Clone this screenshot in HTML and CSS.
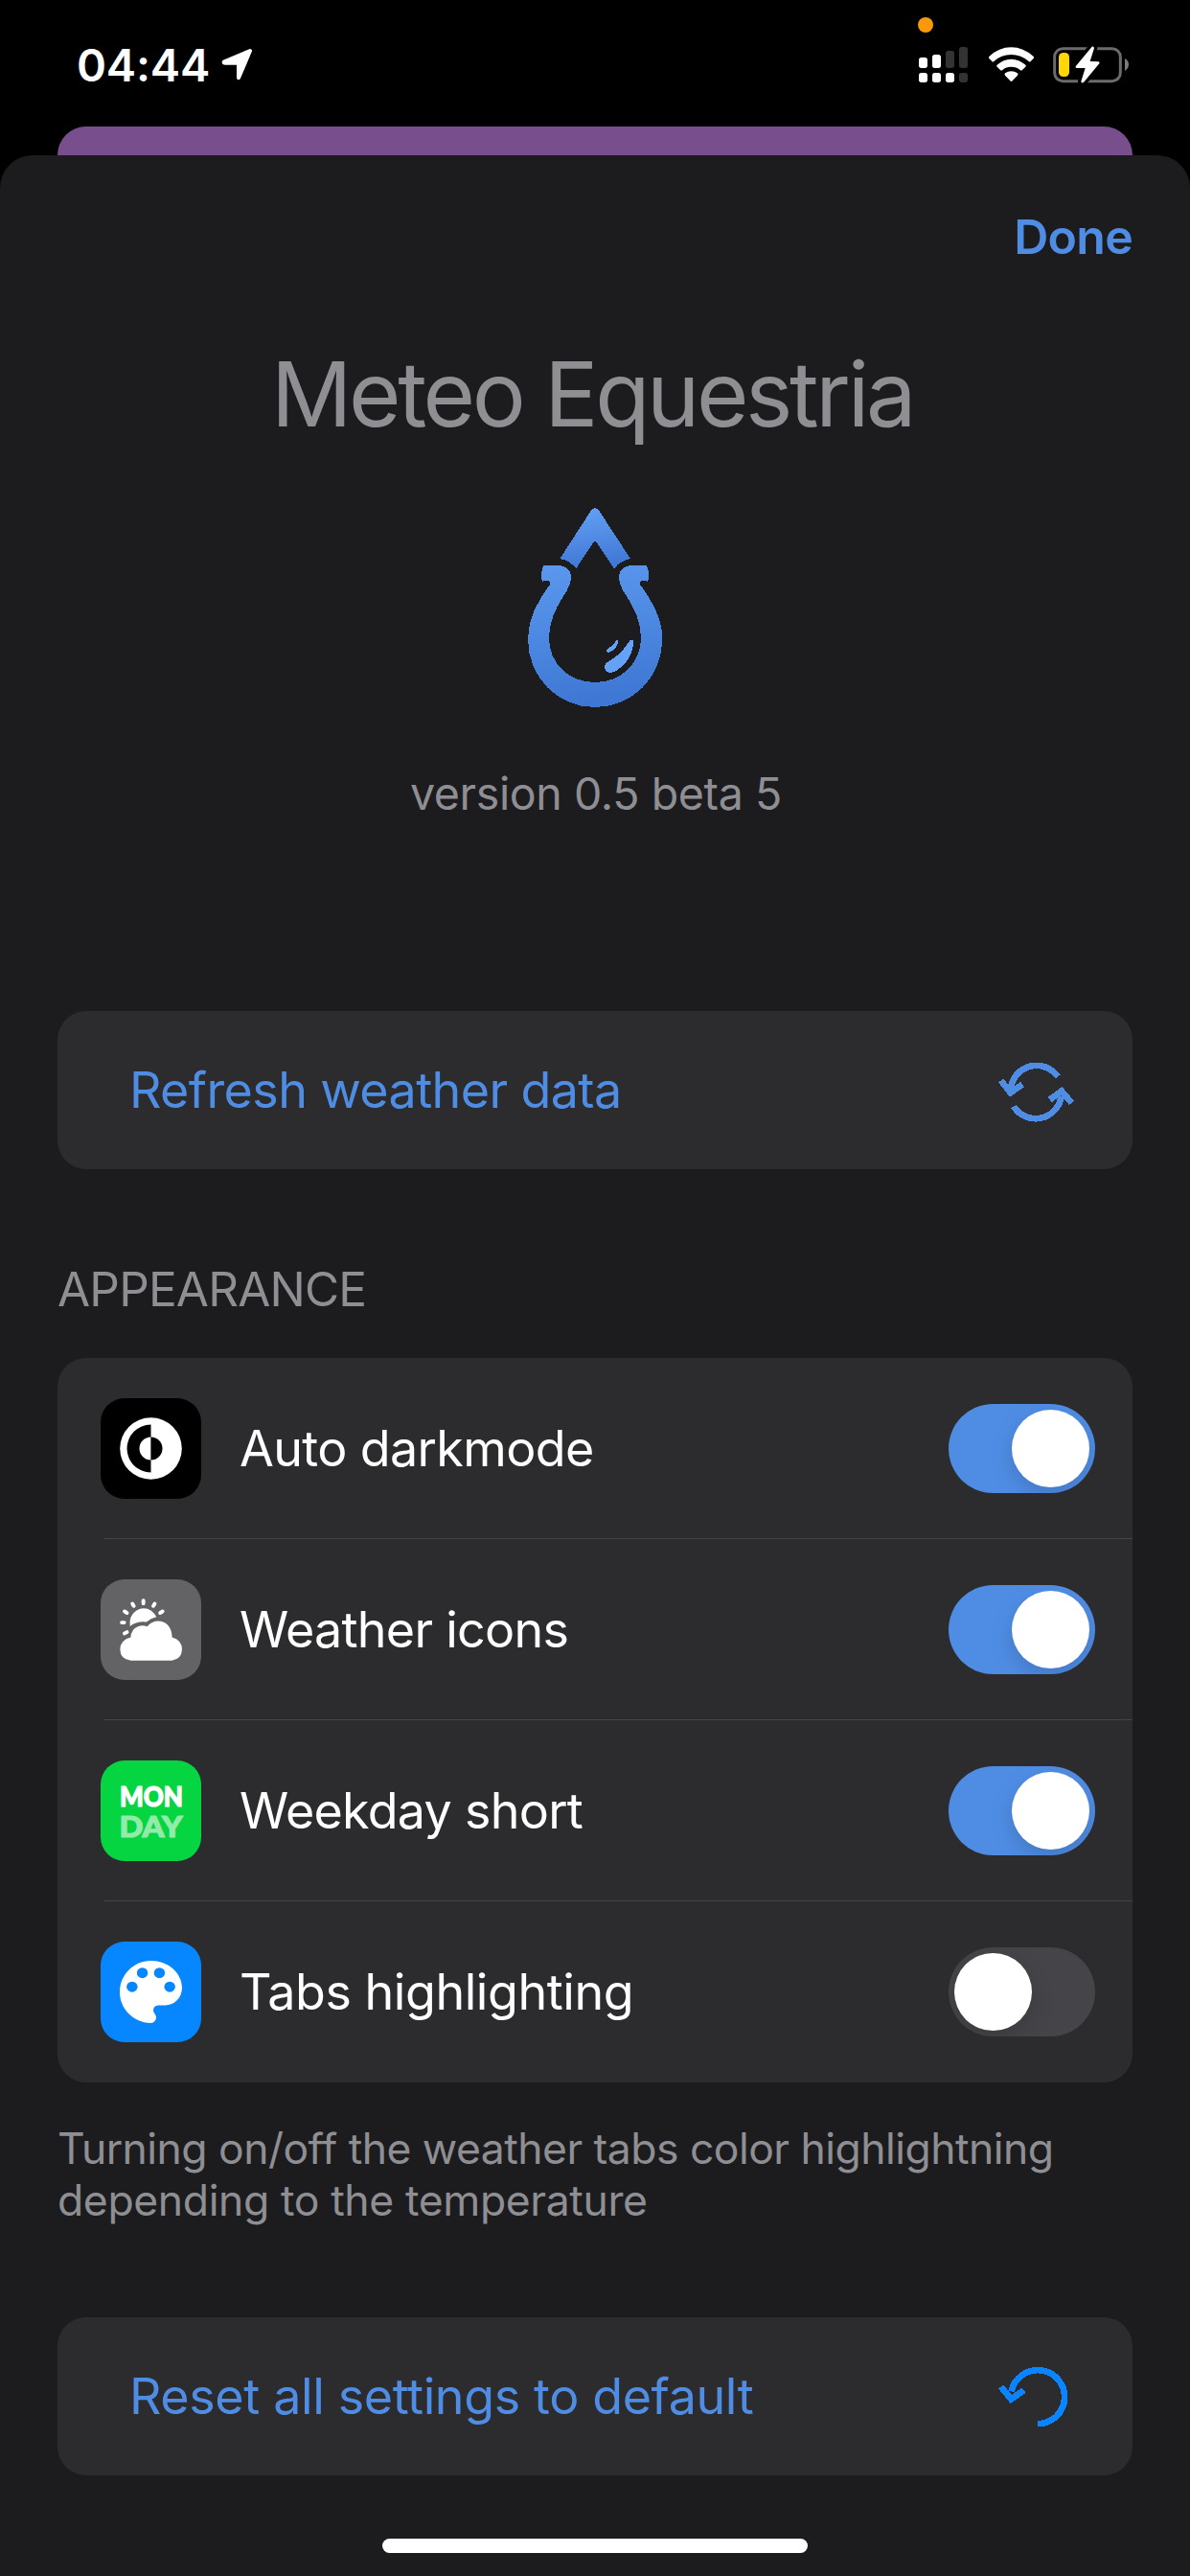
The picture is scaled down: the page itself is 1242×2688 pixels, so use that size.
FILE: index.html
```html
<!DOCTYPE html>
<html lang="en">
<head>
<meta charset="utf-8">
<title>Meteo Equestria</title>
<link rel="stylesheet" href="styles.css">
</head>
<body>
<header class="status">
  <div class="clock"><span class="time">04:44</span>
    <svg class="location" viewBox="690 150 99 102"><path d="M780 159 L698 194 Q698 197 702 197 H741 Q744 198 744 202 V244 Z" fill="#fff" stroke="#fff" stroke-width="12" stroke-linejoin="round"/></svg>
  </div>
  <svg class="indicators" viewBox="174 48 664 216">
    <circle cx="198" cy="78" r="24" fill="#f8990c"/>
    <g fill="#fff">
      <rect x="177" y="180" width="27" height="33" rx="8"/><rect x="219" y="171" width="27" height="42" rx="8"/>
      <rect x="177" y="228" width="27" height="30" rx="8"/><rect x="219" y="228" width="27" height="30" rx="8"/><rect x="261" y="228" width="27" height="30" rx="8"/>
    </g>
    <g fill="#333"><rect x="261" y="159" width="27" height="54" rx="8"/><rect x="303" y="147" width="27" height="66" rx="8"/><rect x="303" y="228" width="27" height="30" rx="8"/></g>
    <g fill="#fff">
      <path d="M397 177 Q428 148 466 148 T536 177 Q539 180 536 183 L527 192 Q524 195 521 192 Q497 171 466 171 T412 192 Q409 195 406 192 L397 183 Q394 180 397 177Z"/>
      <path d="M422 203 Q442 185 466 185 T511 203 Q514 206 511 209 L501 219 Q498 222 494 219 Q482 209 466 209 T439 219 Q435 222 432 219 L422 209 Q419 206 422 203Z"/>
      <path d="M447 229 Q466 217 486 229 Q489 232 486 236 L470 253 Q466 257 463 253 L447 236 Q444 232 447 229Z"/>
    </g>
    <rect x="602" y="152" width="206" height="102" rx="26" fill="none" stroke="#6b6b6b" stroke-width="9"/>
    <path d="M822 183 Q834 190 834 202 T822 222Z" fill="#7c7c7c"/>
    <rect x="615" y="165" width="33" height="75" rx="14" fill="#ffd60a"/>
    <path d="M719 146 L668 208 Q666 212 671 213 L698 213 L685 255 Q686 262 693 258 L742 199 Q745 194 739 193 L713 192 L726 151 Q725 144 719 146Z" fill="#fff" stroke="#000" stroke-width="20" paint-order="stroke"/>
  </svg>
</header>
<div class="behind"></div>
<main class="sheet">
  <button class="done">Done</button>
  <h1 class="title">Meteo Equestria</h1>
  <svg class="logo" viewBox="0 0 540 750" shape-rendering="crispEdges">
    <defs>
      <linearGradient id="tip" x1="0" y1="0" x2=".15" y2="1"><stop offset="0" stop-color="#65a1f7"/><stop offset="1" stop-color="#4079d5"/></linearGradient>
      <linearGradient id="shoe" x1="0" y1="0" x2=".15" y2="1"><stop offset="0" stop-color="#5c98ef"/><stop offset="1" stop-color="#3e78d4"/></linearGradient>
    </defs>
    <path fill="url(#tip)" d="M163 219 L262 66 Q273 55 284 66 L384 219 Q352 225 333 250 L279 169 Q273 162 267 169 L214 250 Q195 225 163 219Z"/>
    <path fill="url(#shoe)" d="M112 240 H155 Q198 242 198 278 Q196 305 175 335 C147 378 129 420 129 468 C129 545 190 606 273 606 C355 606 417 545 417 468 C417 420 399 378 371 335 Q350 305 348 278 Q348 242 391 240 H434 Q440 250 441 265 Q441 280 439 290 L418 288 Q412 291 415 301 C450 350 484 405 484 470 C484 590 390 684 273 684 C155 684 63 590 63 470 C63 405 95 350 131 301 Q134 291 128 288 L107 290 Q105 280 105 265 Q107 250 112 240Z"/>
    <path fill="#65a1f7" d="M382 475 Q392 469 393 479 Q394 510 372 540 Q347 571 323 576 Q304 576 303 556 Q304 546 317 540 Q355 519 382 475ZM340 474 Q346 470 346 477 Q345 490 332 503 Q322 513 313 513 Q306 507 313 500 Q331 490 340 474Z"/>
  </svg>
  <p class="version">version 0.5 beta 5</p>

  <button class="card action refresh"><span>Refresh weather data</span>
    <svg class="action-icon" viewBox="120 190.5 249 204" fill="none" stroke="#4f8de5" stroke-width="20" shape-rendering="crispEdges"><path d="M312 249 A81 81 0 0 0 165 285 M134 261 L164 299 L201 273"/><path d="M174 342 A81 81 0 0 0 323 310 M287 321 L324 294 L355 331"/></svg>
  </button>

  <h2 class="section">APPEARANCE</h2>
  <section class="card list">
    <div class="row">
      <svg class="tile" viewBox="0 0 105 105"><rect width="105" height="105" rx="25"/><circle cx="52.5" cy="52.5" r="32.3" fill="#fff"/><path d="M52.5 27.5a25 25 0 0 0 0 50z"/><path d="M52.5 40.5a12 12 0 0 0 0 24z" fill="#fff"/><path d="M52.5 40.5a12 12 0 0 1 0 24z"/></svg>
      <span class="label darkmode">Auto darkmode</span><i class="switch on"></i>
    </div>
    <div class="row">
      <svg class="tile" viewBox="42 81 294 305" preserveAspectRatio="none"><rect x="42" y="81" width="294" height="305" rx="70" ry="72" fill="#636366"/>
        <g stroke="#fff" stroke-width="11" stroke-linecap="round"><path d="M167 145v9M135 155l4 7M200 155l-4 7M112 178l7 5M223 178l-7 5M104 212h7M112 245l7-4"/></g>
        <path fill="#fff" d="M128 223 Q124 192 146 176 Q168 162 190 176 Q200 184 205 195 Q188 199 176 210 Q147 207 128 223Z"/>
        <path fill="#fff" d="M130 327 Q99 323 99 293 Q100 265 130 257 Q131 232 151 224 Q165 219 178 224 Q191 207 212 207 Q249 211 251 257 Q279 265 280 293 Q279 323 250 327Z"/></svg>
      <span class="label">Weather icons</span><i class="switch on"></i>
    </div>
    <div class="row">
      <svg class="tile" viewBox="0 0 105 105"><rect width="105" height="105" rx="25" fill="#06d542"/><g class="daytext"><text class="mon" x="20" y="48" font-size="28" textLength="66" lengthAdjust="spacingAndGlyphs">MON</text><text class="day" x="19.5" y="80" font-size="31" textLength="66" lengthAdjust="spacingAndGlyphs">DAY</text></g></svg>
      <span class="label">Weekday short</span><i class="switch on"></i>
    </div>
    <div class="row">
      <svg class="tile" viewBox="42 1179 294 305" preserveAspectRatio="none"><rect x="42" y="1179" width="294" height="305" rx="70" ry="72" fill="#0787ff"/>
        <path fill="#fff" d="M189 1237 C240 1237 280 1274 280 1320 C279 1350 258 1372 231 1372 H211 Q196 1373 196 1388 Q197 1394 201 1399 Q206 1405 204 1413 Q200 1426 188 1426 C138 1424 98 1383 98 1332 C98 1280 138 1237 189 1237Z"/>
        <g fill="#0787ff"><circle cx="134" cy="1316" r="16"/><circle cx="164" cy="1274" r="16"/><circle cx="214" cy="1274" r="16"/><circle cx="244" cy="1316" r="16"/></g></svg>
      <span class="label highlighting">Tabs highlighting</span><i class="switch"></i>
    </div>
  </section>
  <p class="note">Turning on/off the weather tabs color highlightning<br><span class="note-end">depending to the temperature</span></p>

  <button class="card action reset"><span>Reset all settings to default</span>
    <svg class="action-icon" viewBox="120 199.5 249 204" fill="none" stroke="#0a84ff" stroke-width="20" shape-rendering="crispEdges"><path d="M249 386 A84 84 0 1 0 167 285 M134 270 L166 309 L206 281"/></svg>
  </button>
  <div class="home"></div>
</main>
</body>
</html>
```
FILE: styles.css
```css
* { box-sizing: border-box; margin: 0; padding: 0; }
body {
  width: 1242px;
  height: 2688px;
  overflow: hidden;
  background: #000;
  color: #fff;
  font-family: Inter, "Liberation Sans", sans-serif;
  display: flex;
  flex-direction: column;
}
button { border: 0; background: none; font: inherit; }
svg { display: block; flex: none; }

.status { height: 132px; padding: 16px 62.667px 0 80px; display: flex; justify-content: space-between; align-items: flex-start; }
.clock { display: flex; gap: 11.5px; padding-top: 22px; }
.time { font-size: 47px; line-height: 60px; font-weight: 600; letter-spacing: -.15px; }
.location { width: 33px; height: 34px; margin-top: 12px; }
.indicators { width: 221.333px; height: 72px; }

.behind { height: 30px; margin: 0 60px; border-radius: 30px 30px 0 0; background: #794e8d; }
.sheet { height: 2526px; padding: 55px 60px 0; border-radius: 34px 34px 0 0; background: #1c1c1e; display: flex; flex-direction: column; }

.done { align-self: flex-end; color: #4f8de5; font-size: 50px; line-height: 60px; font-weight: 600; letter-spacing: -.71px; }
.title { margin-top: 79px; padding-right: 6px; color: #8e8e93; font-size: 93.5px; line-height: 110px; font-weight: 400; letter-spacing: -3.36px; text-align: center; }
.logo { width: 180px; height: 250px; margin: 44px 0 0 470px; }
.version { margin-top: 38px; padding-left: 2px; color: #8e8e93; font-size: 46.5px; line-height: 60px; letter-spacing: -.38px; text-align: center; }

.card { border-radius: 30px; background: #2c2c2e; }
.action { height: 165px; padding: 0 59px 0 75px; display: flex; align-items: center; justify-content: space-between; color: #4f8de5; font-size: 52px; }
.action-icon { width: 83px; height: 68px; }
.refresh { margin-top: 197px; letter-spacing: -.6px; }
.section { margin-top: 95px; color: #8e8e93; font-size: 49.5px; line-height: 60px; font-weight: 400; letter-spacing: -.82px; }
.list { margin-top: 42px; }
.row { position: relative; height: 189px; padding: 0 39px 0 45px; display: flex; align-items: center; }
.row + .row::before { content: ""; position: absolute; top: -1px; left: 48px; right: 0; height: 1px; background: #444447; }
.tile { width: 105px; height: 105px; }
.daytext { font-family: Lato, sans-serif; font-weight: 900; stroke-width: 1.2px; }
.mon { fill: #fff; stroke: #fff; }
.day { fill: #92eba9; stroke: #92eba9; }
.label { margin-left: 40px; font-size: 52px; line-height: 64px; letter-spacing: -.72px; }
.label.darkmode { letter-spacing: -.63px; }
.label.highlighting { letter-spacing: -.46px; }
.switch { width: 153px; height: 93px; margin-left: auto; padding: 6px; border-radius: 47px; background: #454549; display: flex; overflow: hidden; }
.switch::before { content: ""; width: 81px; height: 81px; border-radius: 50%; background: #fff; box-shadow: 0 9px 24px rgba(0, 0, 0, .15); }
.switch.on { background: #4f8de5; justify-content: flex-end; }
.note { margin-top: 42px; color: #8e8e93; font-size: 44.5px; line-height: 54px; letter-spacing: -.54px; white-space: nowrap; }
.note-end { letter-spacing: -.38px; }
.reset { margin-top: 95px; letter-spacing: -.38px; }
.home { width: 444px; height: 15px; margin: 66px auto 0; border-radius: 8px; background: #fff; }
```
